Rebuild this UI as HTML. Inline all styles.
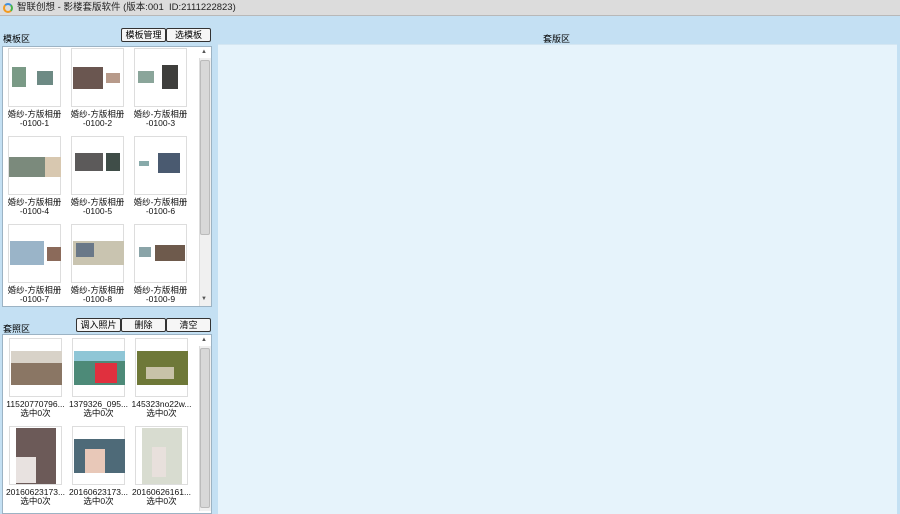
<!DOCTYPE html><html><head><meta charset="utf-8"><style>
*{margin:0;padding:0;box-sizing:border-box}
body{width:900px;height:506px;overflow:hidden;background:#c4e0f3;font-family:"Liberation Sans","Noto Sans CJK SC",sans-serif;font-size:9px;color:#000;position:relative}
.a{position:absolute}
.title{left:0;top:0;width:900px;height:16px;background:#dcdcdc;border-bottom:1px solid #b8b8b8;font-size:9.5px;line-height:15px;padding-left:17px;color:#222}
.logo{left:3px;top:3px;width:10px;height:10px;border-radius:50%;border:2.5px solid #f39a1e;border-top-color:#3a8de0;border-right-color:#46b34a}
.btn{background:#f6f6f6;border:1px solid #333;border-radius:2px;text-align:center;font-size:9px;line-height:12px;height:14px}
.box{background:#fff;border:1px solid #9cb3c4}
.th{width:53px;height:59px;border:1px solid #ddd;background:#fff}
.lb{width:63px;text-align:center;font-size:8.5px;line-height:9px;color:#111}
.sb{background:#f0f0f0;border-left:1px solid #ddd}
.st{background:#d8d8d8;border:1px solid #bbb;border-radius:2px}
</style></head><body>
<div class="a title">智联创想 - 影楼套版软件 (版本:001 &nbsp;ID:2111222823)</div>
<div class="a logo"></div>

<div class="a" style="left:3px;top:32px;font-size:9px">模板区</div>
<div class="a btn" style="left:121px;top:28px;width:45px">模板管理</div>
<div class="a btn" style="left:166px;top:28px;width:45px">选模板</div>
<div class="a box" style="left:2px;top:46px;width:210px;height:261px"></div>
<div class="a sb" style="left:199px;top:58px;width:12px;height:248px"></div>
<div class="a" style="left:201px;top:49px;font-size:6px;color:#555">▲</div>
<div class="a st" style="left:200px;top:60px;width:10px;height:175px"></div>
<div class="a" style="left:201px;top:296px;font-size:6px;color:#555">▼</div>

<div class="a th" style="left:8px;top:48px"><div class="a" style="left:3px;top:18px;width:14px;height:20px;background:#7a9a86"></div><div class="a" style="left:28px;top:22px;width:16px;height:14px;background:#6d8a84"></div></div>
<div class="a th" style="left:71px;top:48px"><div class="a" style="left:1px;top:18px;width:30px;height:22px;background:#6a5650"></div><div class="a" style="left:34px;top:24px;width:14px;height:10px;background:#b79a8a"></div></div>
<div class="a th" style="left:134px;top:48px"><div class="a" style="left:3px;top:22px;width:16px;height:12px;background:#8aa59a"></div><div class="a" style="left:27px;top:16px;width:16px;height:24px;background:#3e3e3c"></div></div>
<div class="a th" style="left:8px;top:136px"><div class="a" style="left:0;top:20px;width:52px;height:20px;background:#7b8a7c"></div><div class="a" style="left:36px;top:20px;width:16px;height:20px;background:#d8c8b0"></div></div>
<div class="a th" style="left:71px;top:136px"><div class="a" style="left:3px;top:16px;width:28px;height:18px;background:#5c5a5a"></div><div class="a" style="left:34px;top:16px;width:14px;height:18px;background:#3f4d48"></div></div>
<div class="a th" style="left:134px;top:136px"><div class="a" style="left:4px;top:24px;width:10px;height:5px;background:#8aa"></div><div class="a" style="left:23px;top:16px;width:22px;height:20px;background:#4a5a70"></div></div>
<div class="a th" style="left:8px;top:224px"><div class="a" style="left:1px;top:16px;width:34px;height:24px;background:#9ab4c8"></div><div class="a" style="left:38px;top:22px;width:14px;height:14px;background:#8b6a5a"></div></div>
<div class="a th" style="left:71px;top:224px"><div class="a" style="left:1px;top:16px;width:51px;height:24px;background:#c9c4b0"></div><div class="a" style="left:4px;top:18px;width:18px;height:14px;background:#6a7888"></div></div>
<div class="a th" style="left:134px;top:224px"><div class="a" style="left:4px;top:22px;width:12px;height:10px;background:#8aa4a8"></div><div class="a" style="left:20px;top:20px;width:30px;height:16px;background:#6e5a4c"></div></div>

<div class="a lb" style="left:3px;top:110px">婚纱-方版相册<br>-0100-1</div>
<div class="a lb" style="left:66px;top:110px">婚纱-方版相册<br>-0100-2</div>
<div class="a lb" style="left:129px;top:110px">婚纱-方版相册<br>-0100-3</div>
<div class="a lb" style="left:3px;top:198px">婚纱-方版相册<br>-0100-4</div>
<div class="a lb" style="left:66px;top:198px">婚纱-方版相册<br>-0100-5</div>
<div class="a lb" style="left:129px;top:198px">婚纱-方版相册<br>-0100-6</div>
<div class="a lb" style="left:3px;top:286px">婚纱-方版相册<br>-0100-7</div>
<div class="a lb" style="left:66px;top:286px">婚纱-方版相册<br>-0100-8</div>
<div class="a lb" style="left:129px;top:286px">婚纱-方版相册<br>-0100-9</div>

<div class="a" style="left:3px;top:322px;font-size:9px">套照区</div>
<div class="a btn" style="left:76px;top:318px;width:45px">调入照片</div>
<div class="a btn" style="left:121px;top:318px;width:45px">删除</div>
<div class="a btn" style="left:166px;top:318px;width:45px">清空</div>
<div class="a box" style="left:2px;top:334px;width:210px;height:180px"></div>
<div class="a sb" style="left:199px;top:346px;width:12px;height:165px"></div>
<div class="a" style="left:201px;top:337px;font-size:6px;color:#555">▲</div>
<div class="a st" style="left:200px;top:348px;width:10px;height:160px"></div>

<div class="a th" style="left:9px;top:338px"><div class="a" style="left:1px;top:12px;width:51px;height:34px;background:#8a7664"></div><div class="a" style="left:1px;top:12px;width:51px;height:12px;background:#d8d2c8"></div></div>
<div class="a th" style="left:72px;top:338px"><div class="a" style="left:1px;top:12px;width:51px;height:34px;background:#4d8a78"></div><div class="a" style="left:1px;top:12px;width:51px;height:10px;background:#8fc6d6"></div><div class="a" style="left:22px;top:24px;width:22px;height:20px;background:#e0303e"></div></div>
<div class="a th" style="left:135px;top:338px"><div class="a" style="left:1px;top:12px;width:51px;height:34px;background:#6e7838"></div><div class="a" style="left:10px;top:28px;width:28px;height:12px;background:#c8c2a8"></div></div>
<div class="a th" style="left:9px;top:426px"><div class="a" style="left:6px;top:1px;width:40px;height:56px;background:#6c5a58"></div><div class="a" style="left:6px;top:30px;width:20px;height:26px;background:#e8e2e0"></div></div>
<div class="a th" style="left:72px;top:426px"><div class="a" style="left:1px;top:12px;width:51px;height:34px;background:#4e6a78"></div><div class="a" style="left:12px;top:22px;width:20px;height:24px;background:#e8c8b8"></div></div>
<div class="a th" style="left:135px;top:426px"><div class="a" style="left:6px;top:1px;width:40px;height:56px;background:#d8dcd0"></div><div class="a" style="left:16px;top:20px;width:14px;height:30px;background:#e8e0dc"></div></div>

<div class="a lb" style="left:4px;top:400px;width:63px">11520770796...<br>选中0次</div>
<div class="a lb" style="left:67px;top:400px;width:63px">1379326_095...<br>选中0次</div>
<div class="a lb" style="left:130px;top:400px;width:63px">145323no22w...<br>选中0次</div>
<div class="a lb" style="left:4px;top:488px;width:63px">20160623173...<br>选中0次</div>
<div class="a lb" style="left:67px;top:488px;width:63px">20160623173...<br>选中0次</div>
<div class="a lb" style="left:130px;top:488px;width:63px">20160626161...<br>选中0次</div>

<div class="a" style="left:543px;top:32px;font-size:9px">套版区</div>
<div class="a" style="left:218px;top:44px;width:679px;height:470px;background:#e6f3fb;border-top:1px solid #d4e6f2"></div>
</body></html>
